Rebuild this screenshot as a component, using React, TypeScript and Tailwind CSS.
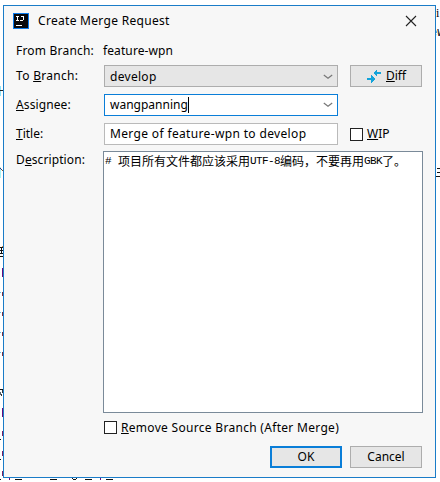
import React from "react";

const Line = ({ c, children }: { c: string; children: React.ReactNode }) => (
  <span className={`block whitespace-pre ${c}`}>{children}</span>
);

const Chevron = () => (
  <svg width="10" height="6" viewBox="0 0 10 6" className="shrink-0" fill="none" stroke="#777" strokeWidth="1.2">
    <path d="M.8 1 L5 4.2 L9.2 1" />
  </svg>
);

const Check = () => <span className="block h-[13px] w-[13px] shrink-0 border border-[#222] bg-white" />;

type Mark = { x: number; y: number; w: number; h: number; c: string };
const marks: Mark[] = [
  { x: 0, y: 86, w: 1, h: 10, c: "#8fe4fa" },
  { x: 0, y: 90, w: 3, h: 1, c: "#222" },
  { x: 0, y: 167, w: 1, h: 11, c: "#a8f4f7" },
  { x: 0, y: 168, w: 1, h: 1, c: "#40306a" },
  { x: 1, y: 169, w: 1, h: 1, c: "#40306a" },
  { x: 2, y: 170, w: 1, h: 1, c: "#8a5a20" },
  { x: 0, y: 247, w: 3, h: 1, c: "#111" },
  { x: 0, y: 250, w: 3, h: 1, c: "#111" },
  { x: 0, y: 253, w: 3, h: 1, c: "#111" },
  { x: 0, y: 256, w: 3, h: 1, c: "#111" },
  { x: 1, y: 247, w: 1, h: 7, c: "#111" },
  { x: 2, y: 246, w: 1, h: 1, c: "#d98a3a" },
  { x: 2, y: 268, w: 1, h: 9, c: "#660e7a" },
  { x: 2, y: 292, w: 1, h: 4, c: "#7a3040" },
  { x: 0, y: 292, w: 1, h: 1, c: "#65bfe5" },
  { x: 2, y: 312, w: 1, h: 4, c: "#7a3040" },
  { x: 0, y: 312, w: 1, h: 1, c: "#65bfe5" },
  { x: 2, y: 332, w: 1, h: 4, c: "#7a3040" },
  { x: 0, y: 332, w: 1, h: 1, c: "#65bfe5" },
  { x: 2, y: 352, w: 1, h: 4, c: "#7a3040" },
  { x: 0, y: 352, w: 1, h: 1, c: "#65bfe5" },
  { x: 0, y: 389, w: 3, h: 1, c: "#111" },
  { x: 2, y: 390, w: 1, h: 3, c: "#333" },
  { x: 0, y: 392, w: 1, h: 3, c: "#54606a" },
  { x: 1, y: 394, w: 1, h: 2, c: "#333" },
  { x: 2, y: 408, w: 1, h: 9, c: "#660e7a" },
  { x: 2, y: 431, w: 1, h: 5, c: "#7a2060" },
  { x: 0, y: 439, w: 1, h: 1, c: "#111" },
  { x: 2, y: 451, w: 1, h: 5, c: "#7a2060" },
  { x: 0, y: 459, w: 1, h: 1, c: "#111" },
  { x: 2, y: 471, w: 1, h: 5, c: "#7a2060" },
  { x: 0, y: 479, w: 1, h: 1, c: "#111" },
  { x: 9, y: 478, w: 1, h: 2, c: "#660e7a" },
  { x: 15, y: 479, w: 7, h: 1, c: "#111" },
  { x: 50, y: 479, w: 7, h: 1, c: "#111" },
  { x: 72, y: 478, w: 1, h: 1, c: "#111" },
  { x: 76, y: 478, w: 1, h: 1, c: "#111" },
  { x: 73, y: 479, w: 3, h: 1, c: "#111" },
  { x: 85, y: 479, w: 7, h: 1, c: "#111" },
  { x: 100, y: 478, w: 1, h: 2, c: "#660e7a" },
  { x: 106, y: 479, w: 7, h: 1, c: "#111" },
  { x: 437, y: 168, w: 3, h: 1, c: "#111" },
  { x: 437, y: 172, w: 3, h: 1, c: "#111" },
  { x: 436, y: 176, w: 4, h: 1, c: "#111" },
];

export default function App() {
  return (
    <div className="relative h-[482px] w-[440px] overflow-hidden bg-white pl-[3px] pt-[5px] font-['Noto_Sans','Noto_Sans_CJK_SC',sans-serif] text-[12px] text-black">
      <svg className="absolute left-0 top-0" width="440" height="482" shapeRendering="crispEdges">
        {marks.map((m, i) => (
          <rect key={i} x={m.x} y={m.y} width={m.w} height={m.h} fill={m.c} />
        ))}
      </svg>
      <span className="absolute left-[436px] top-[5px] font-['Liberation_Serif',serif] text-[12px] leading-[16px]">i</span>
      <span className="absolute left-[430px] top-[25px] font-['Liberation_Mono',monospace] text-[12px] leading-[16px]">ew</span>

      <div className="relative flex h-[473px] w-[433px] flex-col border border-[#1a7cc8] bg-[#f7f7f7]">
        <div className="flex h-[32px] items-center pl-[9px] pr-[18px] pb-[3px] pt-[1px]">
          <svg width="16" height="16" viewBox="0 0 16 16" shapeRendering="crispEdges">
            <rect width="16" height="16" fill="#0b7cf0" />
            <rect x="1" y="1" width="14" height="14" fill="#07090e" />
            <path d="M3 3.5h3M4.5 3v5M3 7.5h3M8 3.5h3M10.5 3v4M7 7.5h3M3 12.5h6" stroke="#fff" fill="none" />
          </svg>
          <Line c="ml-[9px] flex-1 tracking-[0.3px]">Create Merge Request</Line>
          <svg width="12" height="12" viewBox="0 0 12 12" stroke="#222" strokeWidth="1.1">
            <path d="M1 1L11 11M11 1L1 11" />
          </svg>
        </div>

        <div className="mb-px flex h-[26px] items-center pl-[12px]">
          <Line c="w-[87px] tracking-[0.2px]">From Branch:</Line>
          <Line c="tracking-[0.1px]">feature-wpn</Line>
        </div>

        <div className="flex h-[22px] items-center pl-[12px]">
          <Line c="w-[88px] tracking-[0.3px]">To <u>B</u>ranch:</Line>
          <div className="flex h-[22px] w-[234px] items-center justify-between border border-[#adadad] bg-[#e6e6e6] pl-[5px] pr-[4px] pt-px">
            <Line c="tracking-[0.3px]">develop</Line>
            <Chevron />
          </div>
          <div className="ml-[12px] flex h-[22px] w-[72px] items-center border border-[#adadad] bg-[#e6e6e6] pl-[16px]">
            <svg width="14" height="14" viewBox="0 0 14 14" fill="#12a3da" shapeRendering="crispEdges">
              <path d="M6 4 L10 0 V3 h4 v2 h-4 v3z M8 10 L4 6 v3 H0 v2 h4 v3z" />
            </svg>
            <Line c="ml-[5px]"><u>D</u>iff</Line>
          </div>
        </div>

        <div className="mt-[7px] flex h-[22px] items-center pl-[12px]">
          <Line c="w-[88px] tracking-[0.1px]"><u>A</u>ssignee:</Line>
          <div className="flex h-[22px] w-[234px] items-center border border-[#0a7ed8] bg-white pl-[5px] pr-[4px]">
            <Line c="">wangpanning</Line>
            <span className="h-[16px] w-px bg-black" />
            <span className="flex-1" />
            <Chevron />
          </div>
        </div>

        <div className="mt-[7px] flex h-[22px] items-center pl-[12px]">
          <Line c="w-[88px]"><u>T</u>itle:</Line>
          <div className="flex h-[22px] w-[234px] items-center border border-[#bababa] bg-white pl-[5px]">
            <Line c="tracking-[0.35px]">Merge of feature-wpn to develop</Line>
          </div>
          <div className="ml-[12px] flex items-center gap-[4px]">
            <Check />
            <Line c=""><u>W</u>IP</Line>
          </div>
        </div>

        <div className="mt-[6px] flex pl-[12px]">
          <Line c="w-[87px] tracking-[0.1px]">D<u>e</u>scription:</Line>
          <div className="h-[262px] w-[320px] border border-[#7a8a99] bg-white pl-[1px]">
            <div className="flex h-[18px] items-center whitespace-pre font-['Noto_Sans_CJK_SC',sans-serif] text-[12px] leading-[18px]">
              <span className="w-[13px] font-['Liberation_Mono',monospace] text-[11px]">#</span>
              <span>项目所有文件都应该采用</span>
              <span className="w-[30px] font-['Liberation_Mono',monospace] text-[11px] tracking-[-0.6px]">UTF-8</span>
              <span>编码，不要再用</span>
              <span className="w-[18px] font-['Liberation_Mono',monospace] text-[11px] tracking-[-0.6px]">GBK</span>
              <span>了。</span>
            </div>
          </div>
        </div>

        <div className="mt-[5px] flex h-[19px] items-center gap-[4px] pl-[100px]">
          <Check />
          <Line c="tracking-[0.3px]"><u>R</u>emove Source Branch (After Merge)</Line>
        </div>

        <div className="mt-[9px] flex gap-[8px] pl-[266px]">
          <div className="flex h-[22px] w-[72px] items-center justify-center border-2 border-[#0a7ed8] bg-[#e6e6e6]">OK</div>
          <div className="flex h-[22px] w-[72px] items-center justify-center border border-[#adadad] bg-[#e6e6e6]">Cancel</div>
        </div>
      </div>
    </div>
  );
}
